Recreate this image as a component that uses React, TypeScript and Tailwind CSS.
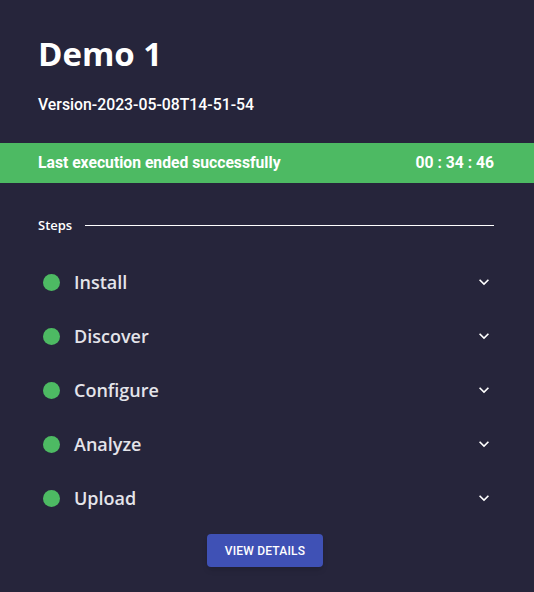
import React from 'react';

const STEPS = ['Install', 'Discover', 'Configure', 'Analyze', 'Upload'];

function ExpandMore() {
  return (
    <svg viewBox="0 0 24 24" className="w-[20px] h-[20px] fill-white shrink-0">
      <path d="M16.59 8.59 12 13.17 7.41 8.59 6 10l6 6 6-6z" />
    </svg>
  );
}

export default function App() {
  return (
    <div className="w-[534px] h-[592px] bg-[#26253b] text-white overflow-hidden flex flex-col">
      {/* Header */}
      <div className="px-[38px] pt-[32px]">
        <h1 className="text-[33px] leading-[44px] font-bold font-['Open_Sans',_sans-serif]">Demo 1</h1>
        <p className="mt-[18px] text-[15.8px] leading-[22px] font-medium font-['Roboto',_sans-serif]">
          Version-2023-05-08T14-51-54
        </p>
      </div>

      {/* Status bar */}
      <div className="mt-[27px] h-[40px] bg-[#4dba63] pl-[38px] pr-[40px] flex items-center justify-between font-['Roboto',_sans-serif] font-bold text-[15.7px]">
        <span>Last execution ended successfully</span>
        <span>00 : 34 : 46</span>
      </div>

      {/* Steps header */}
      <div className="mt-[33px] pl-[38px] pr-[40px] flex items-center gap-[13px]">
        <span className="text-[13px] leading-[18px] font-['Open_Sans',_sans-serif] font-semibold">Steps</span>
        <div className="flex-1 h-px bg-white" />
      </div>

      {/* Steps list */}
      <div className="mt-[21px] pl-[43px] pr-[40px] flex flex-col">
        {STEPS.map((s) => (
          <div key={s} className="h-[54px] flex items-center">
            <span className="w-[17px] h-[17px] rounded-full bg-[#4dba63] shrink-0" />
            <span className="ml-[14px] flex-1 text-[18px] font-semibold text-[#e4e4ea] font-['Open_Sans',_sans-serif]">{s}</span>
            <ExpandMore />
          </div>
        ))}
      </div>

      {/* Button */}
      <div className="mt-[9px] flex justify-center pr-[4px]">
        <button className="w-[116px] h-[33px] rounded bg-[#3f51b5] shadow-md text-[12px] font-medium tracking-[0.2px] font-['Roboto',_sans-serif] uppercase">
          View Details
        </button>
      </div>
    </div>
  );
}
